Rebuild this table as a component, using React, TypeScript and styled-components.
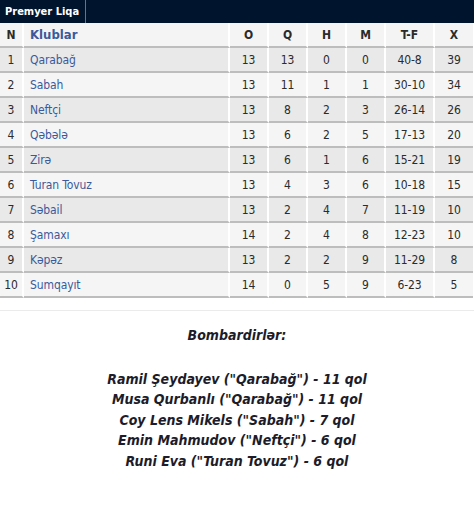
import React from "react";
import styled, { createGlobalStyle } from "styled-components";

const Global = createGlobalStyle`
  html, body { margin: 0; padding: 0; background: #ffffff; }
  body { font-family: "DejaVu Sans Condensed", "DejaVu Sans", sans-serif; }
`;

const Page = styled.div`
  width: 474px;
  display: flex;
  flex-direction: column;
`;

const TopBar = styled.div`
  height: 23px;
  background: #00142d;
  display: flex;
  align-items: stretch;
`;

const Tab = styled.div`
  color: #ffffff;
  font-weight: bold;
  font-size: 11px;
  line-height: 23px;
  padding: 0 6px 0 5px;
  border-right: 1px solid #6b7280;
`;

const Table = styled.table`
  width: 473px;
  border-collapse: separate;
  border-spacing: 0;
  table-layout: fixed;
`;

const Th = styled.th<{ $w: number; $left?: boolean; $blue?: boolean }>`
  box-sizing: border-box;
  width: ${(p) => p.$w}px;
  height: 25px;
  padding: 0;
  background: #f4f4f4;
  border-bottom: 2px solid #bdbdbd;
  border-right: 2px solid #ffffff;
  font-size: ${(p) => (p.$blue ? "13px" : "12px")};
  font-weight: bold;
  color: ${(p) => (p.$blue ? "#3a5a9c" : "#2b2b2b")};
  text-align: ${(p) => (p.$left ? "left" : "center")};
  padding-left: ${(p) => (p.$left ? "6px" : "0")};
  &:last-child { border-right: none; }
`;

const Tr = styled.tr<{ $odd: boolean }>`
  background: ${(p) => (p.$odd ? "#e9e9e9" : "#f5f5f5")};
`;

const Td = styled.td<{ $left?: boolean; $blue?: boolean }>`
  box-sizing: border-box;
  height: 25px;
  padding: 0;
  border-bottom: 2px solid #bdbdbd;
  border-right: 2px solid #ffffff;
  font-size: 12px;
  letter-spacing: -0.1px;
  color: ${(p) => (p.$blue ? "#3a5a9c" : "#2b2b2b")};
  text-align: ${(p) => (p.$left ? "left" : "center")};
  padding-left: ${(p) => (p.$left ? "6px" : "0")};
  white-space: nowrap;
  overflow: hidden;
  &:last-child { border-right: none; }
`;

const Divider = styled.div`
  margin-top: 12px;
  height: 1px;
  background: #ebebeb;
`;

const Scorers = styled.div`
  padding-top: 14px;
  text-align: center;
  font-style: italic;
  font-weight: bold;
  font-size: 14px;
  color: #1c1c2a;
  line-height: 20.6px;
`;

const ScorerTitle = styled.div`
  margin-bottom: 23px;
`;

const rows: [string, number, number, number, number, string, number][] = [
  ["Qarabağ", 13, 13, 0, 0, "40-8", 39],
  ["Sabah", 13, 11, 1, 1, "30-10", 34],
  ["Neftçi", 13, 8, 2, 3, "26-14", 26],
  ["Qəbələ", 13, 6, 2, 5, "17-13", 20],
  ["Zirə", 13, 6, 1, 6, "15-21", 19],
  ["Turan Tovuz", 13, 4, 3, 6, "10-18", 15],
  ["Səbail", 13, 2, 4, 7, "11-19", 10],
  ["Şamaxı", 14, 2, 4, 8, "12-23", 10],
  ["Kəpəz", 13, 2, 2, 9, "11-29", 8],
  ["Sumqayıt", 14, 0, 5, 9, "6-23", 5],
];

const scorers = [
  'Ramil Şeydayev ("Qarabağ") - 11 qol',
  'Musa Qurbanlı ("Qarabağ") - 11 qol',
  'Coy Lens Mikels ("Sabah") - 7 qol',
  'Emin Mahmudov ("Neftçi") - 6 qol',
  'Runi Eva ("Turan Tovuz") - 6 qol',
];

export default function App() {
  return (
    <Page>
      <Global />
      <TopBar>
        <Tab>Premyer Liqa</Tab>
      </TopBar>
      <Table>
        <thead>
          <tr>
            <Th $w={24}>N</Th>
            <Th $w={206} $left $blue>Klublar</Th>
            <Th $w={39}>O</Th>
            <Th $w={39}>Q</Th>
            <Th $w={39}>H</Th>
            <Th $w={39}>M</Th>
            <Th $w={49}>T-F</Th>
            <Th $w={38}>X</Th>
          </tr>
        </thead>
        <tbody>
          {rows.map((r, i) => (
            <Tr key={r[0]} $odd={i % 2 === 0}>
              <Td>{i + 1}</Td>
              <Td $left $blue>{r[0]}</Td>
              <Td>{r[1]}</Td>
              <Td>{r[2]}</Td>
              <Td>{r[3]}</Td>
              <Td>{r[4]}</Td>
              <Td>{r[5]}</Td>
              <Td>{r[6]}</Td>
            </Tr>
          ))}
        </tbody>
      </Table>
      <Divider />
      <Scorers>
        <ScorerTitle>Bombardirlər:</ScorerTitle>
        {scorers.map((s) => (
          <div key={s}>{s}</div>
        ))}
      </Scorers>
    </Page>
  );
}
